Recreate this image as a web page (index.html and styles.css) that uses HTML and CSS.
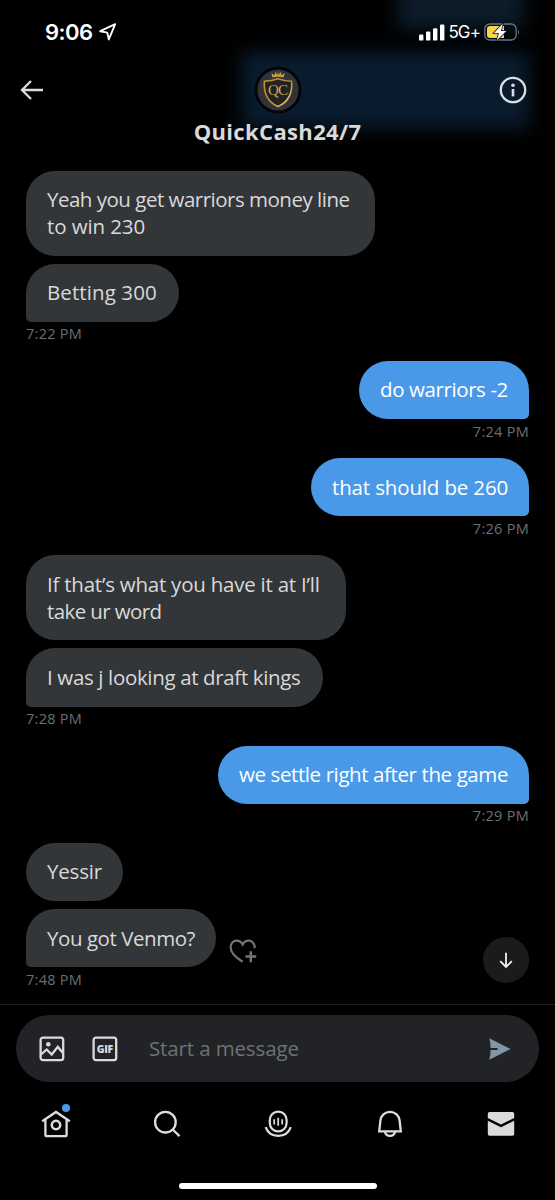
FILE: index.html
```
<!DOCTYPE html>
<html lang="en">
<head>
<meta charset="utf-8">
<title>QuickCash24/7</title>
<link rel="stylesheet" href="styles.css">
</head>
<body>
<div class="phone">
  <div class="top">
    <div class="status">
      <div class="clock"><span>9:06</span>
        <svg width="18" height="18" viewBox="0 0 18 18"><path d="M1.2 8.2 16.2 1.2 9.8 16.4 8.3 9.6Z" fill="none" stroke="#fff" stroke-width="1.9" stroke-linejoin="round"/></svg>
      </div>
      <div class="signal">
        <svg width="26" height="17" viewBox="0 0 26 17" fill="#fff"><rect x="0" y="10.6" width="4.4" height="6" rx="1.2"/><rect x="7" y="7.6" width="4.4" height="9" rx="1.2"/><rect x="14" y="4.2" width="4.4" height="12.4" rx="1.2"/><rect x="21" y="0.4" width="4.4" height="16.2" rx="1.2"/></svg>
        <span>5G+</span>
        <svg class="battery" width="36" height="18" viewBox="0 0 36 18"><rect x=".8" y="1" width="31.4" height="16" rx="5" fill="none" stroke="#69747d" stroke-width="1.3"/><path d="M34 6.4q2 2.6 0 5.2Z" fill="#69747d"/><path d="M6 3h14v12H6a3 3 0 0 1-3-3V6a3 3 0 0 1 3-3Z" fill="#f8d54a"/><path d="M18.7.8 10 9.9h5L12.8 17.3 22.2 8h-5.3Z" fill="#fff" stroke="#0a1a29" stroke-width="1.6" paint-order="stroke"/></svg>
      </div>
    </div>
    <div class="header">
      <svg class="back" width="24" height="22" viewBox="0 0 24 22"><path d="M11 2 2 11l9 9M2.4 11H23" fill="none" stroke="#dcdde0" stroke-width="2.3"/></svg>
      <div class="who">
        <svg width="48" height="48" viewBox="0 0 48 48"><defs><linearGradient id="gold" x1="0" y1="0" x2="1" y2="1"><stop offset="0" stop-color="#c69c2d"/><stop offset=".5" stop-color="#a5842f"/><stop offset="1" stop-color="#f3df7c"/></linearGradient></defs><circle cx="24" cy="24" r="23.5" fill="#020508"/><circle cx="24" cy="24" r="20.6" fill="#343238"/><path d="M24 12.7q-6 2.3-13.6 2.5Q9 34 24 40.5 39 34 37.6 15.2 30 15 24 12.7Z" fill="#222126" stroke="url(#gold)" stroke-width="1.6"/><path d="m18.5 11.5-1.2-4.4 3.2 2.2.8-3.6 2.2 3.2.5-4.6.6 4.6 2.1-3.2.8 3.6 3.2-2.2-1.2 4.4q-5.5-1.600-11 0Z" fill="#c2a344"/><text x="23.5" y="29" text-anchor="middle" class="crest">QC</text></svg>
        <h1>QuickCash24/7</h1>
      </div>
      <svg class="info" width="28" height="28" viewBox="0 0 28 28"><circle cx="14" cy="14" r="12.2" fill="none" stroke="#dcdee5" stroke-width="2.3"/><circle cx="14" cy="9.3" r="1.8" fill="#dcdee5"/><path d="M14 13v7.4" stroke="#dcdee5" stroke-width="2.6"/></svg>
    </div>
  </div>

  <main class="chat">
    <section class="in">
      <p class="bubble b-line">Yeah you get warriors money line<br><span class="b-line-end">to win 230</span></p>
      <p class="bubble tail b-bet">Betting 300</p>
      <time>7:22 PM</time>
    </section>
    <section class="out">
      <p class="bubble tail b-do">do warriors -2</p>
      <time>7:24 PM</time>
    </section>
    <section class="out">
      <p class="bubble tail b-should">that should be 260</p>
      <time>7:26 PM</time>
    </section>
    <section class="in">
      <p class="bubble b-if">If that’s what you have it at I’ll<br><span class="b-if-end">take ur word</span></p>
      <p class="bubble tail b-was">I was j looking at draft kings</p>
      <time>7:28 PM</time>
    </section>
    <section class="out">
      <p class="bubble tail b-settle">we settle right after the game</p>
      <time>7:29 PM</time>
    </section>
    <section class="in">
      <p class="bubble b-yes">Yessir</p>
      <div class="row">
        <p class="bubble tail b-venmo">You got Venmo?</p>
        <svg class="react" width="28" height="25" viewBox="0 0 28 25" fill="none" stroke="#737379" stroke-width="2.2"><path d="M13.6 22.8C5.500 17.800 1.600 13.400 1.600 8.300 1.600 4.400 4.300 1.700 7.600 1.700c2.700 0 4.800 1.500 6 3.800 1.200-2.300 3.300-3.800 6-3.800 3.300 0 6 2.700 6 6.600v1"/><path d="M21.800 12.200v11M16.400 17.600h10.800" stroke-width="2.5"/></svg>
      </div>
      <time>7:48 PM</time>
    </section>
    <div class="jump"><svg width="14" height="17" viewBox="0 0 14 17"><path d="M7 .8v14M1.200 9.200 7 15l5.800-5.800" fill="none" stroke="#f2f2f2" stroke-width="1.8"/></svg></div>
  </main>

  <div class="composer">
    <div class="field">
      <svg width="26" height="26" viewBox="0 0 26 26" fill="none" stroke="#d9dbde" stroke-width="2.3"><rect x="1.600" y="1.600" width="22.600" height="22.600" rx="2.4"/><path d="m2 18.500 5.700-5 5 5 6.100-7.600 5.200 6.200"/><circle cx="9.300" cy="8.300" r="2.3" fill="#d9dbde" stroke="none"/></svg>
      <svg width="26" height="26" viewBox="0 0 26 26"><rect x="1.600" y="1.600" width="22.600" height="22.600" rx="2.4" fill="none" stroke="#d9dbde" stroke-width="2.3"/><text x="13" y="16.800" text-anchor="middle" class="gif" textLength="16.500">GIF</text></svg>
      <span class="placeholder">Start a message</span>
      <svg class="send" width="22" height="22" viewBox="0 0 22 22"><path d="M.3.2 21.600 11 .3 21.800Q1.700 16.500 1.500 12.100h7V9.900h-7Q1.700 5.500.3.2Z" fill="#8296a5"/></svg>
    </div>
  </div>

  <nav class="tabs">
    <div class="tab home"><svg width="30" height="28" viewBox="0 0 30 28" fill="none" stroke="#dedede" stroke-width="2.3"><path d="M1.200 11.200 15 2l13.800 9.200M4.400 9.400v15.300q0 1.500 1.500 1.500h18.200q1.500 0 1.500-1.500V9.400"/><circle cx="15" cy="15" r="4.2" stroke-width="2.5"/></svg><i class="dot"></i></div>
    <div class="tab"><svg width="28" height="28" viewBox="0 0 28 28" fill="none" stroke="#dedede" stroke-width="2.3"><circle cx="12.400" cy="12.200" r="10.3"/><path d="m19.700 19.500 6.800 6.600"/></svg></div>
    <div class="tab"><svg width="28" height="28" viewBox="0 0 28 28" fill="none" stroke="#dedede" stroke-width="2.2"><rect x="5.800" y="1.600" width="16.800" height="19.800" rx="8.3"/><path d="M1.600 17.200c2 5.400 6.800 8.700 12.600 8.700s10.600-3.300 12.600-8.700"/><path d="M10.200 9.200v5.200M14.200 7.800v8M18.200 9.200v5.200" stroke-width="1.7"/></svg></div>
    <div class="tab"><svg width="26" height="28" viewBox="0 0 26 28" fill="none" stroke="#dedede" stroke-width="2.3"><path d="M2.200 21.400 3.400 10.600C3.900 5.600 7.800 1.800 13 1.800s9.100 3.800 9.600 8.800l1.200 10.800Z"/><path d="M8 22c.5 2.400 2.500 3.900 5 3.900s4.500-1.500 5-3.900"/></svg></div>
    <div class="tab"><svg width="28" height="26" viewBox="0 0 28 26" fill="#dadada"><path d="M.8 2.800q0-1.800 1.800-1.800h22.800q1.800 0 1.800 1.800v4.100L14 13.500.8 6.900Z"/><path d="M.8 9.800 14 16.300l13.200-6.500v13.200q0 1.800-1.800 1.800H2.600Q.8 24.800.8 23Z"/></svg></div>
  </nav>
  <div class="indicator"></div>
</div>
</body>
</html>
```
FILE: styles.css
```
* { box-sizing: border-box; }
body { margin: 0; background: #000; }
h1, p { margin: 0; }
svg { display: block; flex: none; }
.phone { width: 555px; height: 1200px; display: flex; flex-direction: column; background: #000; overflow: hidden; font-family: "Open Sans", sans-serif; color: #d9d9d9; }

.top { height: 170.5px; flex: none; position: relative; isolation: isolate; }
.top::before, .top::after { content: ""; position: absolute; z-index: -1; background: #091c2e; filter: blur(9px); }
.top::before { left: 242px; top: 52px; width: 287px; height: 76px; }
.top::after { left: 398px; top: -20px; width: 126px; height: 50px; background: #0b1b28; }
.status { height: 64px; display: flex; justify-content: space-between; align-items: center; padding: 0 35px 0 45px; color: #fff; font-family: Inter, sans-serif; }
.clock { display: flex; align-items: center; gap: 6px; font-size: 22px; font-weight: 600; letter-spacing: -.5px; }
.signal { display: flex; align-items: center; gap: 3px; font-size: 17px; letter-spacing: -.9px; }
.battery { margin-left: 1px; }
.header { height: 91px; display: flex; justify-content: space-between; align-items: flex-start; padding: 0 28px 0 20px; }
.back { margin: 15px 12px 0 0; }
.info { margin-top: 11.5px; }
.who { display: flex; flex-direction: column; align-items: center; margin-top: 2px; }
h1 { margin-top: 2px; font-size: 22px; line-height: 31px; font-weight: 700; letter-spacing: .35px; white-space: nowrap; }
.crest { font: 15px "Liberation Serif", serif; letter-spacing: -1px; fill: #c8aa45; }

.chat { height: 833.5px; flex: none; padding: 0 26px; position: relative; }
section { display: flex; flex-direction: column; gap: 8px; align-items: flex-start; }
.out { align-items: flex-end; }
.bubble { padding: 15.6px 0 15.6px 21px; background: #333639; border-radius: 29px; font-size: 20.5px; line-height: 27px; white-space: nowrap; }
.tail { border-bottom-left-radius: 5px; }
.out .tail { background: #4a99e9; color: #fff; border-radius: 29px 29px 5px 29px; }
time { height: 34px; margin-top: -6.5px; margin-bottom: 3.5px; font-size: 14.5px; line-height: 22px; letter-spacing: .28px; color: #6b6e72; }
.row { display: flex; align-items: flex-end; gap: 13px; }
.react { margin-bottom: 3px; }
.b-line { width: 349px; letter-spacing: -.5px; }
.b-line-end { letter-spacing: -.1px; }
.b-bet { width: 153px; letter-spacing: .1px; }
.b-do { width: 170px; letter-spacing: -.4px; }
.b-should { width: 218px; letter-spacing: -.15px; }
.b-if { width: 320px; letter-spacing: -.23px; }
.b-if-end { letter-spacing: -.6px; }
.b-was { width: 297px; letter-spacing: -.35px; }
.b-settle { width: 311px; letter-spacing: -.4px; }
.b-yes { width: 97px; letter-spacing: -.2px; }
.b-venmo { width: 190px; letter-spacing: -.45px; }
.jump { position: absolute; right: 26px; bottom: 21px; width: 46px; height: 46px; border-radius: 50%; background: #1a1b1c; display: flex; align-items: center; justify-content: center; }

.composer { height: 79px; flex: none; padding: 10px 16px 0; border-top: 1px solid #1d1e1f; }
.field { height: 67px; border-radius: 34px; background: #212327; display: flex; align-items: center; padding: 0 28px 0 23px; gap: 27px; }
.placeholder { margin: -2px 0 0 4px; font-size: 20.5px; letter-spacing: -.13px; color: #6e7276; white-space: nowrap; }
.gif { font: 800 10.5px "Open Sans", sans-serif; fill: #d9dbde; }
.send { margin-left: auto; }
.tabs { height: 82px; flex: none; display: grid; grid-template-columns: repeat(5, 111.3px); }
.tab { display: flex; align-items: center; justify-content: center; }
.home { position: relative; }
.dot { position: absolute; left: 62px; top: 21px; width: 8px; height: 8px; border-radius: 50%; background: #4a99e9; }
.indicator { width: 198px; height: 6px; border-radius: 3px; background: #fff; margin: 18px auto 0; flex: none; }
```
